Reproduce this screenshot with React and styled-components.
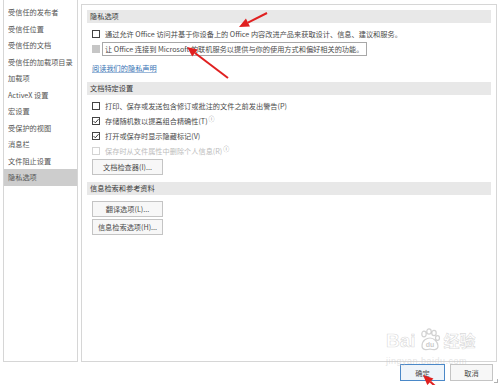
import React from "react";
import styled, { createGlobalStyle } from "styled-components";

const Global = createGlobalStyle`
  html, body {
    margin: 0;
    padding: 0;
    background: #fff;
  }
  body {
    font-family: "Noto Sans CJK SC", "Noto Sans", sans-serif;
    font-size: 7.2px;
    color: #4a4a4a;
  }
`;

const Page = styled.div`
  position: relative;
  width: 500px;
  height: 385px;
  overflow: hidden;
  background: #fff;
`;

const Body = styled.div`
  display: flex;
  height: 362px;
  padding-left: 3px;
  gap: 3px;
`;

const SideList = styled.ul`
  list-style: none;
  margin: 0;
  padding: 4px 0 0;
  width: 73px;
  border: 1px solid #d6d6d6;
  border-top: none;
  background: #fff;
`;

const SideItem = styled.li`
  height: 16.5px;
  line-height: 16.5px;
  padding-left: 4px;
  white-space: nowrap;
  color: #555;
  background: ${(p) => (p.active ? "#cdcdcd" : "transparent")};
`;

const Main = styled.div`
  flex: 1;
  margin-top: 4px;
  margin-right: 3px;
  border: 1px solid #d6d6d6;
  padding: 5px 5px 0 5px;
`;

const SectionHead = styled.div`
  height: 13px;
  line-height: 13px;
  padding-left: 3px;
  background: #e8e8e8;
  color: #383838;
  margin-top: ${(p) => p.gap || 0}px;
`;

const SectionBody = styled.div`
  padding-left: 5px;
  padding-top: ${(p) => p.pt || 3}px;
`;

const Row = styled.div`
  display: flex;
  align-items: center;
  height: 15px;
  gap: 5px;
  white-space: nowrap;
  color: ${(p) => (p.disabled ? "#bcbcbc" : "#4a4a4a")};
`;

const Box = styled.span`
  position: relative;
  width: 8px;
  height: 8px;
  flex: none;
  box-sizing: border-box;
  border: 1px solid ${(p) => (p.filled ? "#c6c6c6" : p.disabled ? "#d4d4d4" : "#444")};
  background: ${(p) => (p.filled ? "#c6c6c6" : "#fff")};
`;

const Focus = styled.span`
  border: 1px solid #a8a8a8;
  padding: 1px 3px 1px 2px;
  margin-left: -3px;
  line-height: 10px;
`;

const Info = styled.sup`
  font-size: 6px;
  color: #909090;
  margin-left: 1px;
`;

const Link = styled.a`
  display: inline-block;
  margin: 5px 0 0 0;
  height: 15px;
  line-height: 15px;
  color: #3571b3;
  text-decoration: underline;
  text-decoration-color: #9db9da;
`;

const Button = styled.button`
  display: block;
  width: 71px;
  height: 16px;
  padding: 0;
  margin-top: ${(p) => p.mt || 0}px;
  font-family: inherit;
  font-size: 7.2px;
  color: #4a4a4a;
  background: #f7f7f7;
  border: 1px solid #c4c4c4;
`;

const Footer = styled.div`
  display: flex;
  justify-content: flex-end;
  gap: 5px;
  padding: 2px 7px 0 0;
`;

const DialogButton = styled.button`
  width: ${(p) => p.w}px;
  height: 17px;
  padding: 0;
  font-family: inherit;
  font-size: 7.2px;
  color: #4a4a4a;
  background: ${(p) => (p.primary ? "#eef4fa" : "#f7f7f7")};
  border: 1px solid ${(p) => (p.primary ? "#4a88c8" : "#c4c4c4")};
`;

const Overlay = styled.svg`
  position: absolute;
  left: 0;
  top: 0;
  pointer-events: none;
`;

const Watermark = styled.div`
  position: absolute;
  left: 386px;
  top: 328px;
  color: rgba(200, 200, 200, 0.5);
  font-family: "Liberation Sans", sans-serif;
  line-height: 1;
`;

const WmBig = styled.div`
  display: flex;
  align-items: center;
  gap: 2px;
  font-size: 19px;
  font-weight: bold;
  -webkit-text-stroke: 0.6px rgba(185, 185, 185, 0.55);
  color: rgba(255, 255, 255, 0.3);
  span.cn {
    font-family: "Noto Sans CJK SC", sans-serif;
    font-size: 16px;
  }
`;

const WmSmall = styled.div`
  font-size: 9px;
  margin-top: 5px;
  letter-spacing: 0.5px;
`;

const Grip = styled.div`
  position: absolute;
  right: 2px;
  bottom: 2px;
  width: 3px;
  height: 3px;
  border-right: 1px solid #b0b0b0;
  border-bottom: 1px solid #b0b0b0;
`;

const sideItems = [
  "受信任的发布者",
  "受信任位置",
  "受信任的文档",
  "受信任的加载项目录",
  "加载项",
  "ActiveX 设置",
  "宏设置",
  "受保护的视图",
  "消息栏",
  "文件阻止设置",
  "隐私选项",
];

const Check = () => (
  <svg width="8" height="8" viewBox="0 0 8 8" style={{ position: "absolute", left: -1, top: -1 }}>
    <path d="M1.6 4.1 L3.3 5.8 L6.5 2.2" fill="none" stroke="#3a3a3a" strokeWidth="1" />
  </svg>
);

const Paw = () => (
  <svg width="24" height="24" viewBox="0 0 24 24" fill="none" stroke="rgba(180,180,180,0.6)" strokeWidth="1.2">
    <ellipse cx="6" cy="6" rx="2.2" ry="2.8" />
    <ellipse cx="11" cy="3.5" rx="2.2" ry="2.6" />
    <ellipse cx="16" cy="5" rx="2.2" ry="2.6" />
    <ellipse cx="19.5" cy="10" rx="2" ry="2.4" />
    <path d="M4 18 C4 12 9 10 12 10 C16 10 20 14 20 18 C20 22 16 22 12 21 C8 22 4 22 4 18 Z" />
    <text x="12" y="19" fontSize="7" textAnchor="middle" fill="rgba(180,180,180,0.7)" stroke="none" fontFamily="Liberation Sans, sans-serif" fontWeight="bold">du</text>
  </svg>
);

const Arrow = ({ x1, y1, x2, y2 }) => {
  const a = Math.atan2(y2 - y1, x2 - x1);
  const len = 10;
  const w = 4.5;
  const bx = x2 - len * Math.cos(a);
  const by = y2 - len * Math.sin(a);
  const px = -Math.sin(a) * w;
  const py = Math.cos(a) * w;
  return (
    <g>
      <line x1={x1} y1={y1} x2={bx} y2={by} stroke="#e02020" strokeWidth="2" />
      <polygon points={`${x2},${y2} ${bx + px},${by + py} ${bx - px},${by - py}`} fill="#e02020" />
    </g>
  );
};

export default function App() {
  return (
    <Page>
      <Global />
      <Body>
        <SideList>
          {sideItems.map((t) => (
            <SideItem key={t} active={t === "隐私选项"}>
              {t}
            </SideItem>
          ))}
        </SideList>
        <Main>
          <SectionHead>隐私选项</SectionHead>
          <SectionBody>
            <Row>
              <Box />
              <span>通过允许 Office 访问并基于你设备上的 Office 内容改进产品来获取设计、信息、建议和服务。</span>
            </Row>
            <Row>
              <Box filled />
              <Focus>让 Office 连接到 Microsoft 的联机服务以提供与你的使用方式和偏好相关的功能。</Focus>
            </Row>
            <Link href="#">阅读我们的隐私声明</Link>
          </SectionBody>

          <SectionHead gap={6}>文档特定设置</SectionHead>
          <SectionBody>
            <Row>
              <Box />
              <span>打印、保存或发送包含修订或批注的文件之前发出警告(P)</span>
            </Row>
            <Row>
              <Box>
                <Check />
              </Box>
              <span>
                存储随机数以提高组合精确性(T)<Info>ⓘ</Info>
              </span>
            </Row>
            <Row>
              <Box>
                <Check />
              </Box>
              <span>打开或保存时显示隐藏标记(V)</span>
            </Row>
            <Row disabled>
              <Box disabled />
              <span>
                保存时从文件属性中删除个人信息(R)<Info>ⓘ</Info>
              </span>
            </Row>
            <Button mt={1}>文档检查器(I)...</Button>
          </SectionBody>

          <SectionHead gap={7}>信息检索和参考资料</SectionHead>
          <SectionBody pt={6}>
            <Button>翻译选项(L)...</Button>
            <Button mt={2}>信息检索选项(H)...</Button>
          </SectionBody>
        </Main>
      </Body>
      <Footer>
        <DialogButton primary w={45}>确定</DialogButton>
        <DialogButton w={43}>取消</DialogButton>
      </Footer>

      <Watermark>
        <WmBig>
          <span>Bai</span>
          <Paw />
          <span className="cn">经验</span>
        </WmBig>
        <WmSmall>jingyan.baidu.com</WmSmall>
      </Watermark>

      <Overlay width="500" height="385" viewBox="0 0 500 385">
        <Arrow x1={267} y1={13} x2={239} y2={27} />
        <Arrow x1={228} y1={78} x2={187} y2={47} />
        <Arrow x1={446} y1={396} x2={423} y2={375} />
      </Overlay>
      <Grip />
    </Page>
  );
}
